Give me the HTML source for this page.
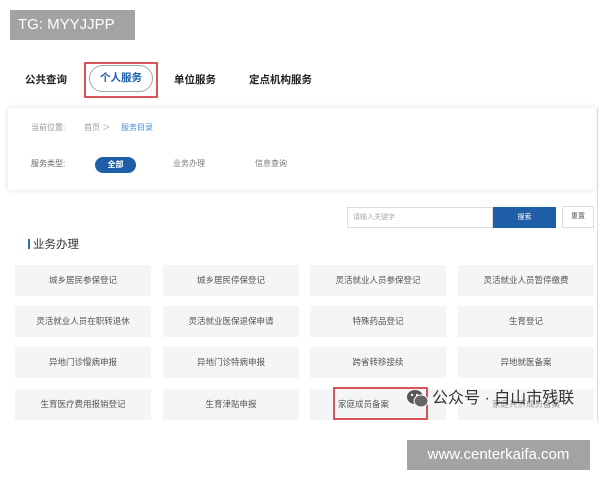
<!DOCTYPE html>
<html><head><meta charset="utf-8"><style>
*{margin:0;padding:0;box-sizing:border-box}
body{width:600px;height:480px;background:#fff;position:relative;overflow:hidden;font-family:"Liberation Sans","Noto Sans CJK SC",sans-serif}
.a{position:absolute}
.tg{left:10px;top:10px;width:125px;height:30px;background:#a3a3a3;color:#fff;font-size:15px;line-height:30px;padding-left:8px}
.nav{top:72px;font-size:10.5px;font-weight:bold;color:#222;line-height:16px}
.pill{left:89px;top:65px;width:64px;height:27px;border:1px solid #9aa;border-radius:14px;color:#1a5fa8;font-size:10.5px;font-weight:bold;text-align:center;line-height:25px}
.red{border:2px solid #d9535b}
.panel{left:8px;top:108px;width:588px;height:82px;box-shadow:0 0 6px rgba(0,0,0,.12);background:#fff}
.sm{font-size:8px;color:#999;line-height:10px}
.cell{width:136px;height:31px;background:#f4f5f6;font-size:8.5px;color:#555;text-align:center;line-height:31px;white-space:nowrap;overflow:hidden}
</style></head><body>
<div class="a tg">TG: MYYJJPP</div>
<div class="a nav" style="left:25px">公共查询</div>
<div class="a red" style="left:84px;top:62px;width:74px;height:36px"></div>
<div class="a pill">个人服务</div>
<div class="a nav" style="left:174px">单位服务</div>
<div class="a nav" style="left:249px">定点机构服务</div>
<div class="a panel"></div>
<div class="a sm" style="left:31px;top:123px">当前位置:</div>
<div class="a sm" style="left:84px;top:123px">首页 ＞</div>
<div class="a sm" style="left:121px;top:123px;color:#4a8ed6">服务目录</div>
<div class="a sm" style="left:31px;top:159px;color:#666">服务类型:</div>
<div class="a" style="left:95px;top:157px;width:41px;height:16px;border-radius:8px;background:#1e5fa8;color:#fff;font-size:8px;font-weight:bold;text-align:center;line-height:16px">全部</div>
<div class="a sm" style="left:173px;top:159px;color:#777">业务办理</div>
<div class="a sm" style="left:255px;top:159px;color:#777">信息查询</div>
<div class="a" style="left:347px;top:207px;width:146px;height:21px;border:1px solid #ddd;font-size:7px;color:#aaa;line-height:19px;padding-left:5px">请输入关键字</div>
<div class="a" style="left:493px;top:207px;width:63px;height:21px;background:#1e5fa8;color:#fff;font-size:7px;text-align:center;line-height:21px">搜索</div>
<div class="a" style="left:562px;top:206px;width:32px;height:22px;border:1px solid #ddd;font-size:7px;color:#555;text-align:center;line-height:20px">重置</div>
<div class="a" style="left:28px;top:239px;width:2px;height:10px;background:#2a6fc0"></div>
<div class="a" style="left:33px;top:237px;font-size:11.5px;color:#333;line-height:16px">业务办理</div>
<div class="a" style="left:597px;top:108px;width:1px;height:314px;background:#ddd"></div>
<div class="a cell" style="left:15px;top:265px">城乡居民参保登记</div>
<div class="a cell" style="left:163px;top:265px">城乡居民停保登记</div>
<div class="a cell" style="left:310px;top:265px">灵活就业人员参保登记</div>
<div class="a cell" style="left:458px;top:265px">灵活就业人员暂停缴费</div>
<div class="a cell" style="left:15px;top:306px">灵活就业人员在职转退休</div>
<div class="a cell" style="left:163px;top:306px">灵活就业医保退保申请</div>
<div class="a cell" style="left:310px;top:306px">特殊药品登记</div>
<div class="a cell" style="left:458px;top:306px">生育登记</div>
<div class="a cell" style="left:15px;top:347px">异地门诊慢病申报</div>
<div class="a cell" style="left:163px;top:347px">异地门诊特病申报</div>
<div class="a cell" style="left:310px;top:347px">跨省转移接续</div>
<div class="a cell" style="left:458px;top:347px">异地就医备案</div>
<div class="a cell" style="left:15px;top:389px">生育医疗费用报销登记</div>
<div class="a cell" style="left:163px;top:389px">生育津贴申报</div>
<div class="a cell" style="left:310px;top:389px;text-align:left;padding-left:28px">家庭成员备案</div>
<div class="a cell" style="left:458px;top:389px;color:#999">家庭共济成员备案</div>
<div class="a red" style="left:333px;top:387px;width:95px;height:33px"></div>
<svg class="a" style="left:407px;top:389px" width="22" height="20" viewBox="0 0 22 20"><ellipse cx="8" cy="8" rx="8" ry="7" fill="#555"/><ellipse cx="14" cy="12" rx="7" ry="6" fill="#666" stroke="#fff" stroke-width="1"/><circle cx="5" cy="6" r="1.2" fill="#fff"/><circle cx="10" cy="6" r="1.2" fill="#fff"/></svg>
<div class="a" style="left:432px;top:389px;font-size:16px;color:#333;line-height:20px;white-space:nowrap">公众号 · 白山市残联</div>
<div class="a" style="left:407px;top:440px;width:183px;height:30px;background:#a3a3a3;color:#fff;font-size:15px;line-height:30px;text-align:center">www.centerkaifa.com</div>
</body></html>
